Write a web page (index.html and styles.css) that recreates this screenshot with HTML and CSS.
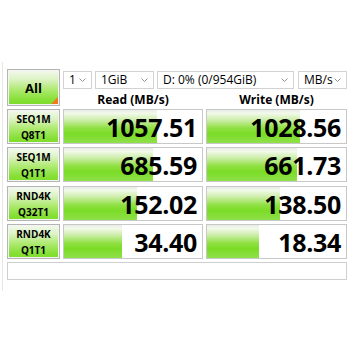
FILE: index.html
```html
<!DOCTYPE html>
<html>
<head>
<meta charset="utf-8">
<link rel="stylesheet" href="styles.css">
</head>
<body>
<div class="frame">
  <div class="grid">
    <div class="btn all">All<span class="corner"></span></div>
    <div class="controls">
      <div class="sel s1"><span>1</span><svg class="chev" viewBox="0 0 7 4"><path d="M0.5 0.5L3.5 3.5L6.5 0.5" fill="none" stroke="#888" stroke-width="0.9"/></svg></div>
      <div class="sel s2"><span>1GiB</span><svg class="chev" viewBox="0 0 7 4"><path d="M0.5 0.5L3.5 3.5L6.5 0.5" fill="none" stroke="#888" stroke-width="0.9"/></svg></div>
      <div class="sel s3"><span>D: 0% (0/954GiB)</span><svg class="chev" viewBox="0 0 7 4"><path d="M0.5 0.5L3.5 3.5L6.5 0.5" fill="none" stroke="#888" stroke-width="0.9"/></svg></div>
      <div class="sel s4"><span>MB/s</span><svg class="chev" viewBox="0 0 7 4"><path d="M0.5 0.5L3.5 3.5L6.5 0.5" fill="none" stroke="#888" stroke-width="0.9"/></svg></div>
    </div>
    <div class="head">Read (MB/s)</div>
    <div class="head">Write (MB/s)</div>

    <div class="btn lbl">SEQ1M<br>Q8T1</div>
    <div class="cell" style="--w:93px">1057.51</div>
    <div class="cell" style="--w:93px">1028.56</div>

    <div class="btn lbl">SEQ1M<br>Q1T1</div>
    <div class="cell" style="--w:89px">685.59</div>
    <div class="cell" style="--w:90px">661.73</div>

    <div class="btn lbl">RND4K<br>Q32T1</div>
    <div class="cell" style="--w:73px">152.02</div>
    <div class="cell" style="--w:73px">138.50</div>

    <div class="btn lbl">RND4K<br>Q1T1</div>
    <div class="cell" style="--w:58px">34.40</div>
    <div class="cell" style="--w:52px">18.34</div>

    <div class="comment"></div>
  </div>
</div>
</body>
</html>
```
FILE: styles.css
```css
html, body {
  margin: 0;
  padding: 0;
  background: #ffffff;
  width: 350px;
  height: 350px;
  overflow: hidden;
  font-family: "Open Sans", "Noto Sans", sans-serif;
  color: #000;
}

.frame {
  margin: 62px 0 0 2px;
  border-left: 1px solid #e6e6e6;
  padding: 7px 0 0 4px;
  height: 222px;
}

.grid {
  display: grid;
  grid-template-columns: 53px 140px 141px;
  grid-template-rows: 19px 18px 38px 39px 38px 38px 21px;
  column-gap: 3px;
  row-gap: 0;
}

.btn {
  box-sizing: border-box;
  border: 1px solid #b4b4b4;
  box-shadow: inset 0 0 0 1px #f4f4f4;
  background: linear-gradient(to bottom, #f3f9ee 0%, #dff3c8 25%, #b0ea74 55%, #86e036 85%, #7edc2c 100%);
  display: flex;
  align-items: center;
  justify-content: center;
  text-align: center;
  font-weight: 700;
}

.all {
  grid-row: 1 / 3;
  grid-column: 1;
  font-size: 13px;
  position: relative;
}

.corner {
  position: absolute;
  right: 1px;
  bottom: 1px;
  width: 0;
  height: 0;
  border-style: solid;
  border-width: 0 0 7px 7px;
  border-color: transparent transparent #f07a1c transparent;
}

.controls {
  grid-row: 1;
  grid-column: 2 / 4;
  display: flex;
  gap: 3px;
  padding-top: 2px;
}

.sel {
  box-sizing: border-box;
  height: 18px;
  border: 1px solid #d2d2d2;
  background: #fff;
  display: flex;
  align-items: center;
  justify-content: space-between;
  padding: 0 5px 0 5px;
  font-size: 12px;
  line-height: 1;
}

.s1 { width: 29px; }
.s2 { width: 59px; }
.s3 { width: 137px; }
.s4 { width: 49px; margin-left: 1px; }

.chev {
  width: 7px;
  height: 4px;
  flex: none;
}

.head {
  grid-row: 2;
  font-size: 12px;
  font-weight: 700;
  display: flex;
  align-items: flex-end;
  justify-content: center;
  line-height: 16px;
  padding-bottom: 0;
  margin-bottom: -2px;
}

.lbl {
  font-size: 10px;
  line-height: 16px;
  margin-top: 3px;
}

.cell {
  box-sizing: border-box;
  margin-top: 3px;
  border: 1px solid #c8c8c8;
  background-color: #fff;
  background-image: linear-gradient(to bottom, #e9ece6 0%, #f2f9ea 10%, #cdeeaa 30%, #8fe042 55%, #7bdc26 72%, #8fe04a 100%);
  background-size: var(--w) 100%;
  background-repeat: no-repeat;
  display: flex;
  align-items: center;
  justify-content: flex-end;
  padding-right: 5px;
  font-size: 25px;
  font-weight: 700;
  letter-spacing: -0.3px;
}

.lbl, .cell { height: 35px; }

.comment {
  grid-column: 1 / 4;
  box-sizing: border-box;
  margin-top: 3px;
  height: 18px;
  border: 1px solid #cfcfcf;
  background: #fff;
}
```
